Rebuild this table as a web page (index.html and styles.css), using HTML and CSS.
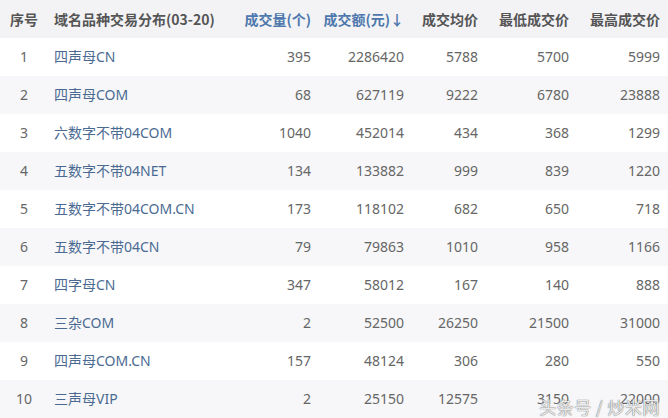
FILE: index.html
```html
<!DOCTYPE html>
<html lang="zh">
<head>
<meta charset="utf-8">
<link rel="stylesheet" href="styles.css">
</head>
<body>
<div class="wrap">
<table class="tbl">
  <colgroup>
    <col class="c1"><col class="c2"><col class="c3"><col class="c4"><col class="c5"><col class="c6"><col class="c7">
  </colgroup>
  <thead>
    <tr>
      <th class="idx">序号</th>
      <th class="name">域名品种交易分布(03-20)</th>
      <th class="num blue">成交量(个)</th>
      <th class="num blue">成交额(元)↓</th>
      <th class="num">成交均价</th>
      <th class="num">最低成交价</th>
      <th class="num last">最高成交价</th>
    </tr>
  </thead>
  <tbody>
    <tr><td class="idx">1</td><td class="name">四声母CN</td><td class="num">395</td><td class="num">2286420</td><td class="num">5788</td><td class="num">5700</td><td class="num last">5999</td></tr>
    <tr><td class="idx">2</td><td class="name">四声母COM</td><td class="num">68</td><td class="num">627119</td><td class="num">9222</td><td class="num">6780</td><td class="num last">23888</td></tr>
    <tr><td class="idx">3</td><td class="name">六数字不带04COM</td><td class="num">1040</td><td class="num">452014</td><td class="num">434</td><td class="num">368</td><td class="num last">1299</td></tr>
    <tr><td class="idx">4</td><td class="name">五数字不带04NET</td><td class="num">134</td><td class="num">133882</td><td class="num">999</td><td class="num">839</td><td class="num last">1220</td></tr>
    <tr><td class="idx">5</td><td class="name">五数字不带04COM.CN</td><td class="num">173</td><td class="num">118102</td><td class="num">682</td><td class="num">650</td><td class="num last">718</td></tr>
    <tr><td class="idx">6</td><td class="name">五数字不带04CN</td><td class="num">79</td><td class="num">79863</td><td class="num">1010</td><td class="num">958</td><td class="num last">1166</td></tr>
    <tr><td class="idx">7</td><td class="name">四字母CN</td><td class="num">347</td><td class="num">58012</td><td class="num">167</td><td class="num">140</td><td class="num last">888</td></tr>
    <tr><td class="idx">8</td><td class="name">三杂COM</td><td class="num">2</td><td class="num">52500</td><td class="num">26250</td><td class="num">21500</td><td class="num last">31000</td></tr>
    <tr><td class="idx">9</td><td class="name">四声母COM.CN</td><td class="num">157</td><td class="num">48124</td><td class="num">306</td><td class="num">280</td><td class="num last">550</td></tr>
    <tr><td class="idx">10</td><td class="name">三声母VIP</td><td class="num">2</td><td class="num">25150</td><td class="num">12575</td><td class="num">3150</td><td class="num last">22000</td></tr>
  </tbody>
</table>
<div class="mark">头条号 / 炒米网</div>
</div>
</body>
</html>
```
FILE: styles.css
```css
html, body {
  margin: 0;
  padding: 0;
  background: #ffffff;
}
.wrap {
  position: relative;
  width: 668px;
  height: 418px;
  overflow: hidden;
}
.tbl {
  width: 668px;
  border-collapse: collapse;
  table-layout: fixed;
  font-family: "Noto Sans", "Noto Sans CJK SC", sans-serif;
  font-size: 14px;
  color: #666666;
}
.c1 { width: 48px; }
.c2 { width: 188px; }
.c3 { width: 85px; }
.c4 { width: 93px; }
.c5 { width: 74px; }
.c6 { width: 91px; }
.c7 { width: 89px; }
.tbl th, .tbl td {
  height: 38px;
  padding: 0;
  line-height: 38px;
  white-space: nowrap;
  vertical-align: middle;
}
.tbl thead tr {
  background: #f3f3f5;
}
.tbl th {
  font-weight: bold;
  color: #555555;
  font-family: "Noto Sans CJK SC", sans-serif;
}
.tbl th.blue {
  color: #4e78ad;
}
.tbl tbody tr:nth-child(even) {
  background: #f7f7f9;
}
.idx {
  text-align: center;
}
.name {
  text-align: left;
  padding-left: 6px !important;
}
.tbl td.name {
  color: #4a6a92;
}
.num {
  text-align: right;
  padding-right: 10px !important;
}
.num.last {
  padding-right: 8px !important;
}
.mark {
  position: absolute;
  right: 8px;
  bottom: 1px;
  font-family: "Noto Sans CJK SC", sans-serif;
  font-size: 17px;
  line-height: 20px;
  color: rgba(255, 255, 255, 0.85);
  text-shadow: 0 0 1px #777, 0 0 1px #777;
  letter-spacing: 0.5px;
}
```
